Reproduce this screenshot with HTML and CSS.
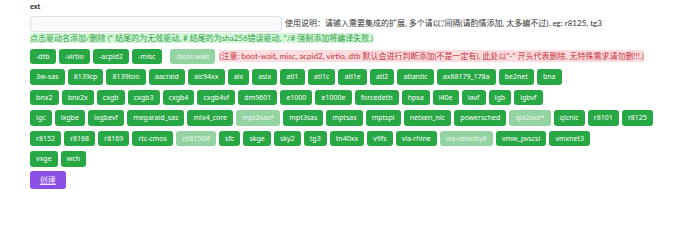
FILE: index.html
```html
<!DOCTYPE html>
<html lang="zh">
<head>
<meta charset="utf-8">
<title>ext</title>
<link rel="stylesheet" href="styles.css">
</head>
<body>
<div class="page">
  <div class="label">ext</div>
  <div class="input-row">
    <div class="input"></div>
    <span class="help">使用说明：请输入需要集成的扩展, 多个请以','间隔(请酌情添加, 太多编不过). eg: r8125, tg3</span>
  </div>
  <div class="hint-line"><span class="hint">点击驱动名添加/删除 (* 结尾的为无效驱动, # 结尾的为sha256错误驱动, */# 强制添加将编译失败.)</span></div>
  <div class="rows">
    <div class="row">
      <span class="btn">-dtb</span>
      <span class="btn">-virtio</span>
      <span class="btn">-acpid2</span>
      <span class="btn">-misc</span>
      <span class="btn off spaced">-boot-wait</span>
      <span class="note">(注意: boot-wait, misc, acpid2, virtio, dtb 默认会进行判断添加(不是一定有), 此处以"-" 开头代表删除, 无特殊需求请勿删!!!.)</span>
    </div>
    <div class="row">
      <span class="btn">3w-sas</span><span class="btn">8139cp</span><span class="btn">8139too</span><span class="btn">aacraid</span><span class="btn">aic94xx</span><span class="btn">alx</span><span class="btn">asix</span><span class="btn">atl1</span><span class="btn">atl1c</span><span class="btn">atl1e</span><span class="btn">atl2</span><span class="btn">atlantic</span><span class="btn">ax88179_178a</span><span class="btn">be2net</span><span class="btn">bna</span>
    </div>
    <div class="row">
      <span class="btn">bnx2</span><span class="btn">bnx2x</span><span class="btn">cxgb</span><span class="btn">cxgb3</span><span class="btn">cxgb4</span><span class="btn">cxgb4vf</span><span class="btn">dm9601</span><span class="btn">e1000</span><span class="btn">e1000e</span><span class="btn">forcedeth</span><span class="btn">hpsa</span><span class="btn">i40e</span><span class="btn">iavf</span><span class="btn">igb</span><span class="btn">igbvf</span>
    </div>
    <div class="row">
      <span class="btn">igc</span><span class="btn">ixgbe</span><span class="btn">ixgbevf</span><span class="btn">megaraid_sas</span><span class="btn">mlx4_core</span><span class="btn off">mpt2sas*</span><span class="btn">mpt3sas</span><span class="btn">mptsas</span><span class="btn">mptspi</span><span class="btn">netxen_nic</span><span class="btn">powersched</span><span class="btn off">qla2xxx*</span><span class="btn">qlcnic</span><span class="btn">r8101</span><span class="btn">r8125</span>
    </div>
    <div class="row">
      <span class="btn">r8152</span><span class="btn">r8168</span><span class="btn">r8169</span><span class="btn">rtc-cmos</span><span class="btn off">rtl8150#</span><span class="btn">sfc</span><span class="btn">skge</span><span class="btn">sky2</span><span class="btn">tg3</span><span class="btn">tn40xx</span><span class="btn">v9fs</span><span class="btn">via-rhine</span><span class="btn off">via-velocity#</span><span class="btn">vmw_pvscsi</span><span class="btn">vmxnet3</span>
    </div>
    <div class="row">
      <span class="btn">vxge</span><span class="btn">wch</span>
    </div>
  </div>
  <div class="actions"><span class="create">创建</span></div>
</div>
</body>
</html>
```

FILE: styles.css
```css
html, body {
  margin: 0;
  padding: 0;
  background: #ffffff;
}

.page {
  padding: 2px 0 0 30px;
  font-family: "Lato", "Noto Sans CJK SC", sans-serif;
  font-size: 8px;
  color: #333;
}

.label {
  font-family: "Noto Sans", sans-serif;
  font-size: 6.5px;
  font-weight: 700;
  line-height: 10px;
  color: #333;
  margin-bottom: 4px;
}

.input-row {
  display: flex;
  align-items: center;
  gap: 3px;
}

.input {
  width: 252px;
  height: 15.5px;
  box-sizing: border-box;
  border: 1px solid #dfe2ea;
  border-radius: 4px;
  background: #f8f9fb;
}

.help {
  font-size: 8px;
  line-height: 11px;
  color: #333;
  white-space: nowrap;
}

.hint-line {
  margin-top: 1.5px;
  line-height: 11px;
}

.hint {
  background: #d4f7da;
  color: #2f9e44;
  font-size: 8px;
  white-space: nowrap;
}

.rows {
  margin-top: 4.5px;
  display: flex;
  flex-direction: column;
  gap: 5px;
}

.row {
  display: flex;
  align-items: center;
  gap: 3px;
}

.btn {
  display: inline-block;
  box-sizing: border-box;
  height: 15.5px;
  line-height: 15.5px;
  padding: 0 6.1px;
  font-family: "Noto Sans", sans-serif;
  font-size: 7px;
  color: #ffffff;
  background: #28a745;
  border-radius: 3px;
  white-space: nowrap;
}

.btn.off {
  background: #94d3a2;
  color: #eef8f0;
}

.btn.spaced {
  margin-left: 5px;
}

.note {
  margin-left: 1px;
  background: #fbdde0;
  color: #c8323f;
  font-size: 8px;
  line-height: 12px;
  white-space: nowrap;
}

.actions {
  margin-top: 4.7px;
  display: flex;
}

.create {
  display: inline-block;
  box-sizing: border-box;
  width: 35.5px;
  height: 17.5px;
  line-height: 17.5px;
  text-align: center;
  font-family: "Noto Sans CJK SC", sans-serif;
  font-size: 8px;
  color: #f1e9ff;
  background: #8a4fe3;
  border-radius: 3px;
  text-decoration: underline;
}
```
